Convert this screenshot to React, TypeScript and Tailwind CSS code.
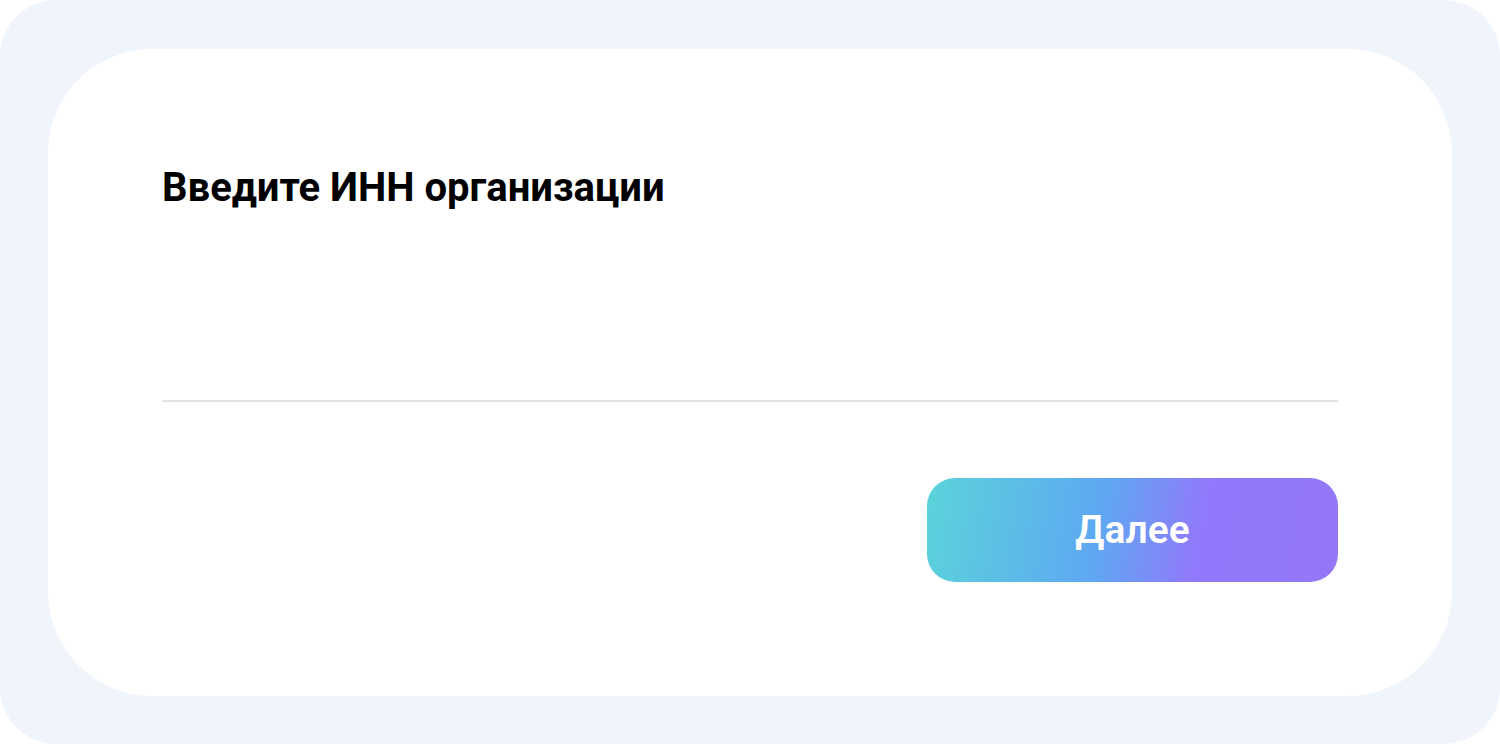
export default function App() {
  return (
    <div className="w-[1500px] h-[744px] bg-white font-['Roboto',sans-serif]">
      <div className="w-full h-full rounded-[56px] bg-[#f0f5fb] p-12 pt-[49px] pb-[48px]">
        <div className="h-full rounded-[104px] bg-white pl-[114px] pr-[114px] pt-[115px] flex flex-col">
          <h1 className="text-[40px] leading-[48px] font-bold text-black">
            Введите ИНН организации
          </h1>
          {/* поле ввода */}
          <input
            type="text"
            className="mt-[146px] h-[44px] border-b-2 border-[#e3e3e3] outline-none text-[28px] bg-transparent"
          />
          <div className="flex justify-end mt-[76px]">
            <button className="w-[411px] h-[104px] rounded-[28px] bg-[linear-gradient(100deg,#5bd4da_0%,#5ea8f2_42%,#9179fb_66%,#9477f7_100%)] text-white text-[39px] font-semibold">
              Далее
            </button>
          </div>
        </div>
      </div>
    </div>
  );
}
